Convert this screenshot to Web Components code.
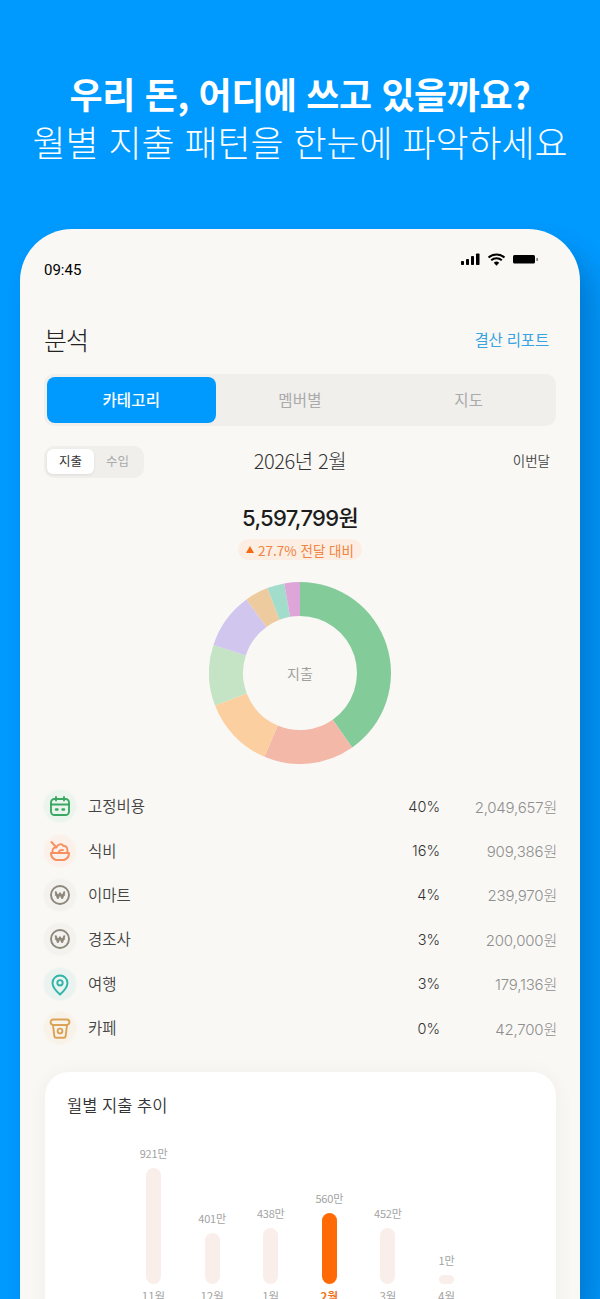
<!DOCTYPE html>
<html lang="ko">
<head>
<meta charset="utf-8">
<title>분석</title>
<style>
  html, body { margin: 0; height: 1299px; overflow: hidden; background: #009aff; }
  body { font-family: "Noto Sans CJK KR", "Noto Sans", sans-serif; }
</style>
</head>
<body>
<promo-hero>
  <span slot="main">우리 돈, 어디에 쓰고 있을까요?</span>
  <span slot="sub">월별 지출 패턴을 한눈에 파악하세요</span>
</promo-hero>
<phone-frame>
  <status-bar time="09:45"></status-bar>
  <page-header title="분석" action="결산 리포트"></page-header>
  <tab-bar tabs="카테고리,멤버별,지도"></tab-bar>
  <month-bar></month-bar>
  <total-summary amount="5,597,799원" delta="27.7% 전달 대비"></total-summary>
  <donut-chart label="지출"></donut-chart>
  <category-list></category-list>
  <trend-card heading="월별 지출 추이"></trend-card>
</phone-frame>

<script>
{
const KR = '"Noto Sans CJK KR", "Noto Sans", sans-serif';
const NUM = 'Inter, "Noto Sans CJK KR", sans-serif';

class PromoHero extends HTMLElement {
  constructor() {
    super();
    this.attachShadow({mode: 'open'}).innerHTML = `
<style>
  :host { display: block; height: 229px; box-sizing: border-box; padding-top: 64px; color: #fff; text-align: center; font-family: ${KR}; }
  div { white-space: nowrap; }
  .main { font-size: 36px; font-weight: 700; line-height: 59px; letter-spacing: -0.4px; }
  .sub { font-size: 36px; font-weight: 300; line-height: 36px; letter-spacing: -0.1px; }
</style>
<div class="main"><slot name="main"></slot></div>
<div class="sub"><slot name="sub"></slot></div>`;
  }
}

class PhoneFrame extends HTMLElement {
  constructor() {
    super();
    this.attachShadow({mode: 'open'}).innerHTML = `
<style>
  :host { display: block; margin: 0 20px; height: 1070px; box-sizing: border-box; padding: 0 24px; background: #f9f8f5; border-radius: 52px 52px 0 0; box-shadow: 14px 20px 30px rgba(0, 40, 90, .28); overflow: hidden; }
</style>
<slot></slot>`;
  }
}

class StatusBar extends HTMLElement {
  constructor() {
    super();
    this.attachShadow({mode: 'open'}).innerHTML = `
<style>
  :host { display: flex; justify-content: space-between; height: 62px; box-sizing: border-box; color: #000; }
  .time { font: 400 15px/20px Roboto, sans-serif; padding-top: 31px; }
  svg { display: block; margin: 23px 16px 0 0; }
</style>
<span class="time">${this.getAttribute('time')}</span>
<svg width="80" height="16" viewBox="0 0 80 16">
  <rect x="1" y="9" width="3" height="4" rx=".8"/><rect x="6" y="7" width="3" height="6" rx=".8"/>
  <rect x="11" y="4" width="3" height="9" rx=".8"/><rect x="16" y="1.5" width="3.5" height="11.5" rx=".8"/>
  <path d="M28.5 5.6a12 12 0 0 1 16 0" fill="none" stroke="#000" stroke-width="2"/>
  <path d="M31.2 8.3a8 8 0 0 1 10.6 0" fill="none" stroke="#000" stroke-width="2"/>
  <path d="M33.8 10.7a4.2 4.2 0 0 1 5.4 0L36.5 13.8z"/>
  <rect x="53" y="3" width="22" height="8.5" rx="1.5"/><rect x="76.5" y="6" width="1.2" height="3" fill="#555"/>
</svg>`;
  }
}

class PageHeader extends HTMLElement {
  constructor() {
    super();
    this.attachShadow({mode: 'open'}).innerHTML = `
<style>
  :host { display: flex; justify-content: space-between; align-items: center; height: 83px; padding-top: 12px; box-sizing: border-box; font-family: ${KR}; }
  h1 { margin: 0; font-size: 25px; font-weight: 300; color: #222; letter-spacing: -1px; }
  a { font-size: 15.5px; color: #3aa3e3; margin-right: 7px; font-weight: 400; letter-spacing: -0.2px; }
</style>
<h1>${this.getAttribute('title')}</h1><a>${this.getAttribute('action')}</a>`;
  }
}

class TabBar extends HTMLElement {
  constructor() {
    super();
    const tabs = this.getAttribute('tabs').split(',');
    this.attachShadow({mode: 'open'}).innerHTML = `
<style>
  :host { display: grid; grid-template-columns: repeat(3, 1fr); height: 52px; width: 512px; box-sizing: border-box; padding: 3px; background: #f0efec; border-radius: 10px; font: 400 15.5px ${KR}; color: #aaa; }
  span { display: flex; align-items: center; justify-content: center; border-radius: 8px; letter-spacing: .2px; padding-bottom: 3px; }
  .on { background: #009aff; color: #fff; font-weight: 500; }
</style>
${tabs.map((t, i) => `<span class="${i ? '' : 'on'}">${t}</span>`).join('')}`;
  }
}

class MonthBar extends HTMLElement {
  constructor() {
    super();
    this.attachShadow({mode: 'open'}).innerHTML = `
<style>
  :host { display: grid; grid-template-columns: 1fr auto 1fr; align-items: center; height: 32px; margin-top: 20px; width: 512px; font-family: ${KR}; }
  .seg { justify-self: start; display: flex; box-sizing: border-box; width: 100px; height: 32px; padding: 3px; background: #f0efec; border-radius: 10px; font-size: 12.5px; color: #aaa; }
  .seg span { display: flex; align-items: center; justify-content: center; width: 47px; height: 25px; border-radius: 6px; padding-bottom: 2px; box-sizing: border-box; }
  .seg .on { background: #fff; color: #333; box-shadow: 0 1px 3px rgba(0,0,0,.08); }
  .month { font-size: 20px; font-weight: 300; color: #333; letter-spacing: -0.4px; padding-bottom: 3px; }
  .now { justify-self: end; margin-right: 6px; font-size: 13.5px; font-weight: 350; color: #444; padding-bottom: 4px; }
</style>
<div class="seg"><span class="on">지출</span><span>수입</span></div>
<div class="month">2026년 2월</div>
<div class="now">이번달</div>`;
  }
}

class TotalSummary extends HTMLElement {
  constructor() {
    super();
    this.attachShadow({mode: 'open'}).innerHTML = `
<style>
  :host { display: flex; flex-direction: column; align-items: center; width: 512px; margin-top: 24px; font-family: ${KR}; }
  .amt { font: 500 22px/32px ${NUM}; color: #1c1c1c; letter-spacing: -0.7px; }
  .delta { display: flex; align-items: center; gap: 4px; margin-top: 5px; height: 21px; padding: 0 8px; background: #fdeee4; border-radius: 11px; font-size: 13.5px; color: #ef8440; }
  .delta i { width: 0; height: 0; border: 4.5px solid transparent; border-top: 0; border-bottom: 7px solid #f26a12; }
</style>
<div class="amt">${this.getAttribute('amount')}</div>
<div class="delta"><i></i>${this.getAttribute('delta')}</div>`;
  }
}

class DonutChart extends HTMLElement {
  constructor() {
    super();
    const slices = [[0, 145, '#84cb9a'], [145, 203, '#f4b8a8'], [203, 249, '#fbcfa0'], [249, 288, '#c5e4c5'],
      [288, 324, '#d1c6ee'], [324, 339, '#eecb9f'], [339, 350, '#a2dccb'], [350, 360, '#dea6d8']];
    const pt = (r, a) => {
      const t = a * Math.PI / 180;
      return `${(91 + r * Math.sin(t)).toFixed(2)} ${(91 - r * Math.cos(t)).toFixed(2)}`;
    };
    const paths = slices.map(([a, b, c]) => {
      const big = b - a > 180 ? 1 : 0;
      return `<path fill="${c}" d="M${pt(91, a)}A91 91 0 ${big} 1 ${pt(91, b)}L${pt(57, b)}A57 57 0 ${big} 0 ${pt(57, a)}Z"/>`;
    }).join('');
    this.attachShadow({mode: 'open'}).innerHTML = `
<style>
  :host { display: grid; place-items: center; width: 512px; margin-top: 22px; font: 400 14px ${KR}; color: #a0a0a0; }
  svg, span { grid-area: 1 / 1; }
  svg { display: block; }
</style>
<svg width="182" height="182" viewBox="0 0 182 182">${paths}</svg><span>${this.getAttribute('label')}</span>`;
  }
}

const ICONS = {
  calendar: `<rect x="3" y="5" width="18" height="16" rx="3.5"/><path d="M3 10.5h18M8 3v3.5M16 3v3.5"/><path d="M8 15.5h1.5M14.5 15.5H16" stroke-width="2.4"/>`,
  bowl: `<path d="M3 14h18v1a7.500 7.500 0 0 1-5 6H8a7.500 7.500 0 0 1-5-6z"/><path d="M5 14c-1.500-2.500 0-6 3.500-5.500C9.500 5 14 4 15.500 7c3-.5 5 2.500 3.500 7"/><path d="M10.500 14c.5-2.500 2.500-3.500 4.500-3"/><path d="M3.500 3l4.500 5"/>`,
  won: `<circle cx="12" cy="12" r="9"/><path d="M7.5 12h9" stroke-width="1.5"/><path d="M7.8 9.3l2 5.700 2.200-4.600 2.200 4.600 2-5.700" stroke-width="2.1"/>`,
  pin: `<path d="M12 22.500c-4.300-3.800-7.500-7.400-7.500-11.500a7.500 7.500 0 0 1 15 0c0 4.100-3.200 7.700-7.500 11.500z"/><circle cx="12" cy="10.800" r="2.700"/>`,
  cup: `<path d="M5 9h14l-1.300 11a2 2 0 0 1-2 1.700H8.300a2 2 0 0 1-2-1.700z"/><path d="M5.500 9a2.500 2.500 0 0 1-.3-5.500h13.600a2.500 2.500 0 0 1-.3 5.500"/><circle cx="12" cy="15" r="2.400"/>`
};

class CategoryRow extends HTMLElement {
  constructor() {
    super();
    const a = (k) => this.getAttribute(k);
    this.attachShadow({mode: 'open'}).innerHTML = `
<style>
  :host { display: grid; grid-template-columns: 44px 1fr 50px 117px; align-items: center; height: 44.4px; font-family: ${KR}; }
  .dot { display: grid; place-items: center; width: 32px; height: 32px; border-radius: 50%; background: ${a('bg')}; box-shadow: 0 0 3px ${a('bg')}; }
  svg { fill: none; stroke: ${a('color')}; stroke-width: 1.9; stroke-linecap: round; stroke-linejoin: round; }
  .name { font-size: 15.5px; color: #444; font-weight: 350; padding-bottom: 2px; }
  .pct { text-align: right; font: 350 14.5px ${NUM}; color: #333; }
  .amt { text-align: right; font: 300 15px ${NUM}; color: #8f8f8f; letter-spacing: -0.2px; }
</style>
<span class="dot"><svg width="24" height="24" viewBox="0 0 24 24">${ICONS[a('icon')]}</svg></span>
<span class="name">${a('name')}</span><span class="pct">${a('pct')}</span><span class="amt">${a('amt')}</span>`;
  }
}

class CategoryList extends HTMLElement {
  constructor() {
    super();
    const rows = [
      ['calendar', '#3aa862', '#ecf4ee', '고정비용', '40%', '2,049,657원'],
      ['bowl', '#f78f5e', '#fbf1ea', '식비', '16%', '909,386원'],
      ['won', '#8d877c', '#f4f2ee', '이마트', '4%', '239,970원'],
      ['won', '#8d877c', '#f4f2ee', '경조사', '3%', '200,000원'],
      ['pin', '#2fb5a8', '#ebf3f0', '여행', '3%', '179,136원'],
      ['cup', '#dba257', '#f8f2e8', '카페', '0%', '42,700원']
    ];
    this.attachShadow({mode: 'open'}).innerHTML = `
<style>
  :host { display: block; width: 513px; margin-top: 20px; }
</style>
${rows.map(([icon, color, bg, name, pct, amt]) => `<category-row icon="${icon}" color="${color}" bg="${bg}" name="${name}" pct="${pct}" amt="${amt}"></category-row>`).join('')}`;
  }
}

class TrendCard extends HTMLElement {
  constructor() {
    super();
    const months = [['921만', 116, '11월'], ['401만', 51, '12월'], ['438만', 56, '1월'], ['560만', 71, '2월', 1], ['452만', 56, '3월'], ['1만', 9, '4월']];
    this.attachShadow({mode: 'open'}).innerHTML = `
<style>
  :host { display: block; width: 511px; height: 300px; box-sizing: border-box; margin: 22px 0 0 1px; padding: 21px 22px; background: #fff; border-radius: 24px; box-shadow: 0 2px 18px rgba(120, 100, 80, .07); font-family: ${KR}; }
  h2 { margin: 0; font-size: 16.5px; line-height: 24px; font-weight: 350; color: #333; }
  .chart { display: grid; grid-template-columns: repeat(6, 58.6px); justify-content: center; align-items: end; height: 167px; margin: 0 0 0 -1px; }
  .col { display: flex; flex-direction: column; align-items: center; gap: 8px; font-size: 11px; color: #a3a3a3; }
  .val { line-height: 14px; letter-spacing: -0.2px; }
  .bar { width: 15px; border-radius: 8px; background: #f9eee9; }
  .on .bar { background: #ff6a05; }
  .labels { display: grid; grid-template-columns: repeat(6, 58.6px); justify-content: center; margin: 4px 0 0 -1px; font-size: 11.5px; line-height: 16px; color: #a3a3a3; text-align: center; }
  .labels .on { color: #f0741f; font-weight: 700; }
</style>
<h2>${this.getAttribute('heading')}</h2>
<div class="chart">${months.map(([v, h, , on]) => `<div class="col ${on ? 'on' : ''}"><span class="val">${v}</span><div class="bar" style="height:${h}px"></div></div>`).join('')}</div>
<div class="labels">${months.map(([, , m, on]) => `<span class="${on ? 'on' : ''}">${m}</span>`).join('')}</div>`;
  }
}

customElements.define('promo-hero', PromoHero);
customElements.define('phone-frame', PhoneFrame);
customElements.define('status-bar', StatusBar);
customElements.define('page-header', PageHeader);
customElements.define('tab-bar', TabBar);
customElements.define('month-bar', MonthBar);
customElements.define('total-summary', TotalSummary);
customElements.define('donut-chart', DonutChart);
customElements.define('category-row', CategoryRow);
customElements.define('category-list', CategoryList);
customElements.define('trend-card', TrendCard);
}
</script>
</body>
</html>
